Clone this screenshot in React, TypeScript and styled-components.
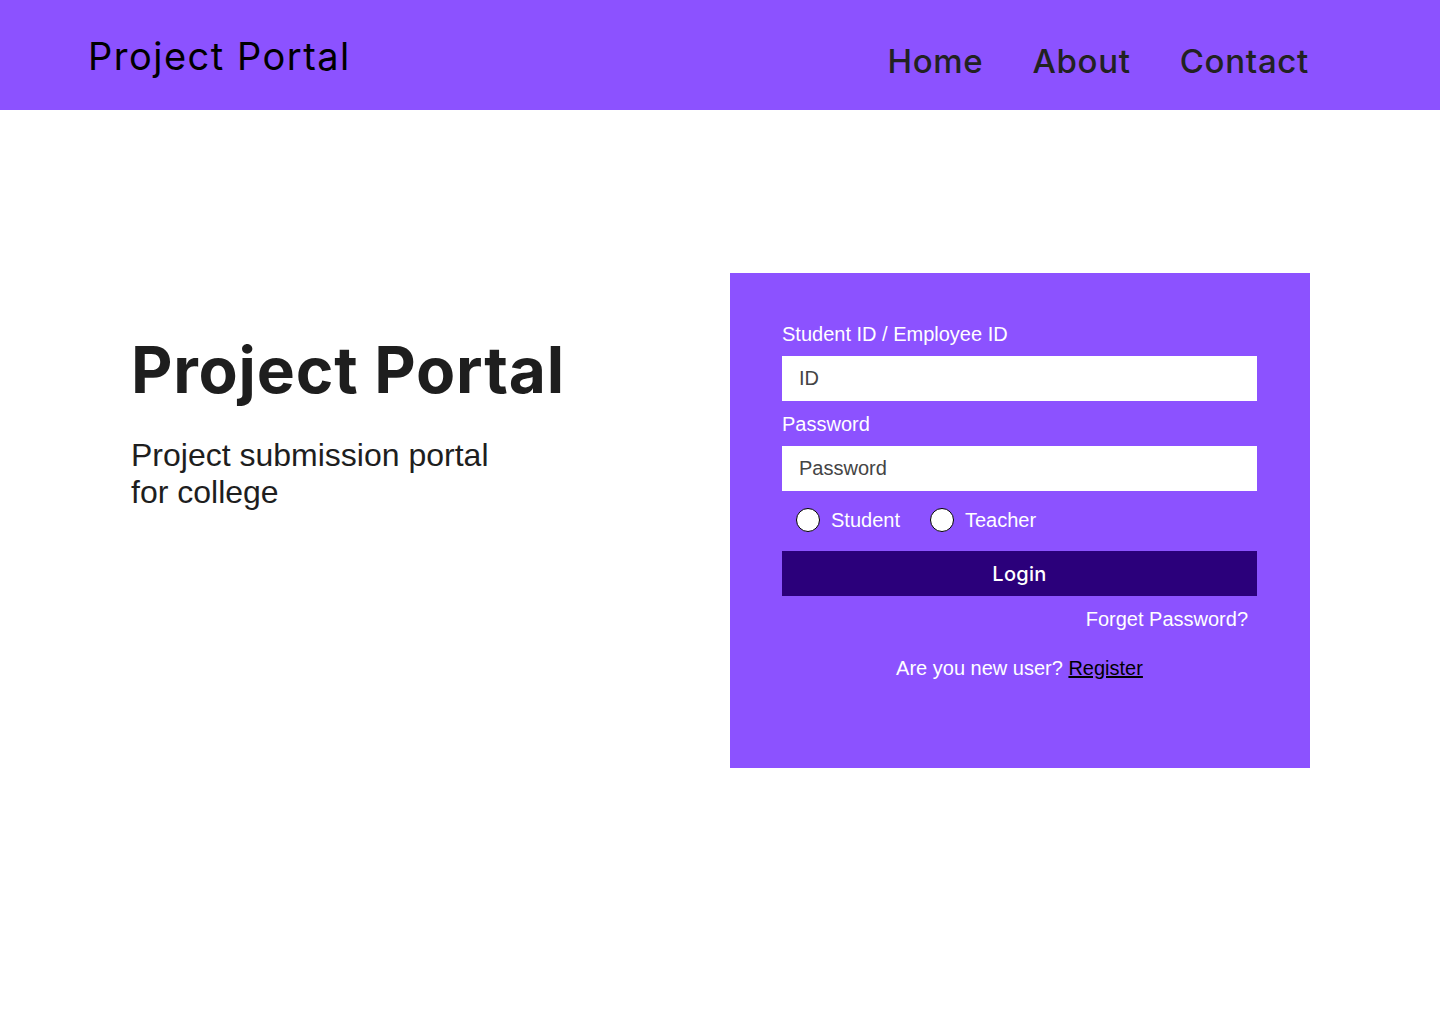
import React from "react";
import styled, { createGlobalStyle } from "styled-components";

const PURPLE = "#8c52ff";
const DISPLAY = `"Inter", "Open Sans", sans-serif`;
const BODY = `"Liberation Sans", Arial, sans-serif`;

const Global = createGlobalStyle`
  html, body { margin: 0; padding: 0; background: #fff; }
  body { font-family: ${BODY}; }
  * { box-sizing: border-box; }
`;

const Page = styled.div`
  width: 1440px;
  min-height: 1024px;
  background: #fff;
`;

const Header = styled.header`
  height: 110px;
  background: ${PURPLE};
  display: flex;
  align-items: flex-start;
  justify-content: space-between;
  padding: 0 131px 0 88px;
`;

const Logo = styled.div`
  font-family: ${DISPLAY};
  font-weight: 400;
  font-size: 38px;
  letter-spacing: 1.5px;
  line-height: 1;
  color: #000;
  margin-top: 37px;
`;

const Nav = styled.nav`
  display: flex;
  gap: 49px;
  margin-top: 45px;
`;

const NavLink = styled.a`
  font-family: ${DISPLAY};
  font-weight: 500;
  font-size: 33px;
  letter-spacing: 0.7px;
  line-height: 1;
  color: #222;
  text-decoration: none;
`;

const Main = styled.main`
  display: flex;
  justify-content: space-between;
  padding: 163px 130px 0 131px;
`;

const Intro = styled.section`
  padding-top: 59px;
`;

const Title = styled.h1`
  margin: 0;
  font-family: ${DISPLAY};
  font-weight: 700;
  font-size: 64px;
  letter-spacing: 0.8px;
  line-height: 1.2;
  color: #1e1e1e;
`;

const Subtitle = styled.p`
  margin: 28px 0 0;
  font-family: ${BODY};
  font-size: 32px;
  line-height: 37px;
  color: #1e1e1e;
`;

const Card = styled.form`
  width: 580px;
  height: 495px;
  background: ${PURPLE};
  padding: 50px 53px 0 52px;
  display: flex;
  flex-direction: column;
`;

const Label = styled.label<{ $top?: number }>`
  display: block;
  font-family: ${BODY};
  font-size: 20px;
  line-height: 23px;
  color: #fff;
  margin-top: ${(p) => p.$top ?? 0}px;
`;

const Input = styled.input`
  display: block;
  width: 100%;
  height: 45px;
  margin-top: 10px;
  border: none;
  outline: none;
  background: #fff;
  padding: 0 17px;
  font-family: ${BODY};
  font-size: 20px;
  color: #333;
  &::placeholder { color: #444; }
`;

const RadioRow = styled.div`
  display: flex;
  align-items: center;
  padding-left: 14px;
  margin-top: 17px;
  height: 24px;
  gap: 30px;
`;

const RadioOption = styled.label`
  display: flex;
  align-items: center;
  gap: 11px;
  font-family: ${BODY};
  font-size: 20px;
  color: #fff;
`;

const Radio = styled.input`
  appearance: none;
  margin: 0;
  width: 24px;
  height: 24px;
  border-radius: 50%;
  background: #fff;
  border: 1px solid #000;
`;

const LoginButton = styled.button`
  width: 100%;
  height: 45px;
  margin-top: 19px;
  border: none;
  background: #2b007b;
  color: #fff;
  font-family: ${DISPLAY};
  font-weight: 500;
  font-size: 20px;
  letter-spacing: 0.3px;
  cursor: pointer;
`;

const Forgot = styled.a`
  align-self: flex-end;
  margin: 12px 9px 0 0;
  font-family: ${BODY};
  font-size: 20px;
  line-height: 23px;
  color: #fff;
  text-decoration: none;
`;

const NewUser = styled.p`
  margin: 26px 0 0;
  text-align: center;
  font-family: ${BODY};
  font-size: 20px;
  line-height: 23px;
  color: #fff;
`;

const RegisterLink = styled.a`
  color: #000;
  text-decoration: underline;
`;

export default function App() {
  return (
    <Page>
      <Global />
      <Header>
        <Logo>Project Portal</Logo>
        <Nav>
          <NavLink href="#">Home</NavLink>
          <NavLink href="#">About</NavLink>
          <NavLink href="#">Contact</NavLink>
        </Nav>
      </Header>
      <Main>
        <Intro>
          <Title>Project Portal</Title>
          <Subtitle>
            Project submission portal
            <br />
            for college
          </Subtitle>
        </Intro>
        <Card onSubmit={(e) => e.preventDefault()}>
          <Label>Student ID / Employee ID</Label>
          <Input placeholder="ID" />
          <Label $top={12}>Password</Label>
          <Input type="password" placeholder="Password" />
          <RadioRow>
            <RadioOption>
              <Radio type="radio" name="role" />
              Student
            </RadioOption>
            <RadioOption>
              <Radio type="radio" name="role" />
              Teacher
            </RadioOption>
          </RadioRow>
          <LoginButton type="submit">Login</LoginButton>
          <Forgot href="#">Forget Password?</Forgot>
          <NewUser>
            Are you new user? <RegisterLink href="#">Register</RegisterLink>
          </NewUser>
        </Card>
      </Main>
    </Page>
  );
}
